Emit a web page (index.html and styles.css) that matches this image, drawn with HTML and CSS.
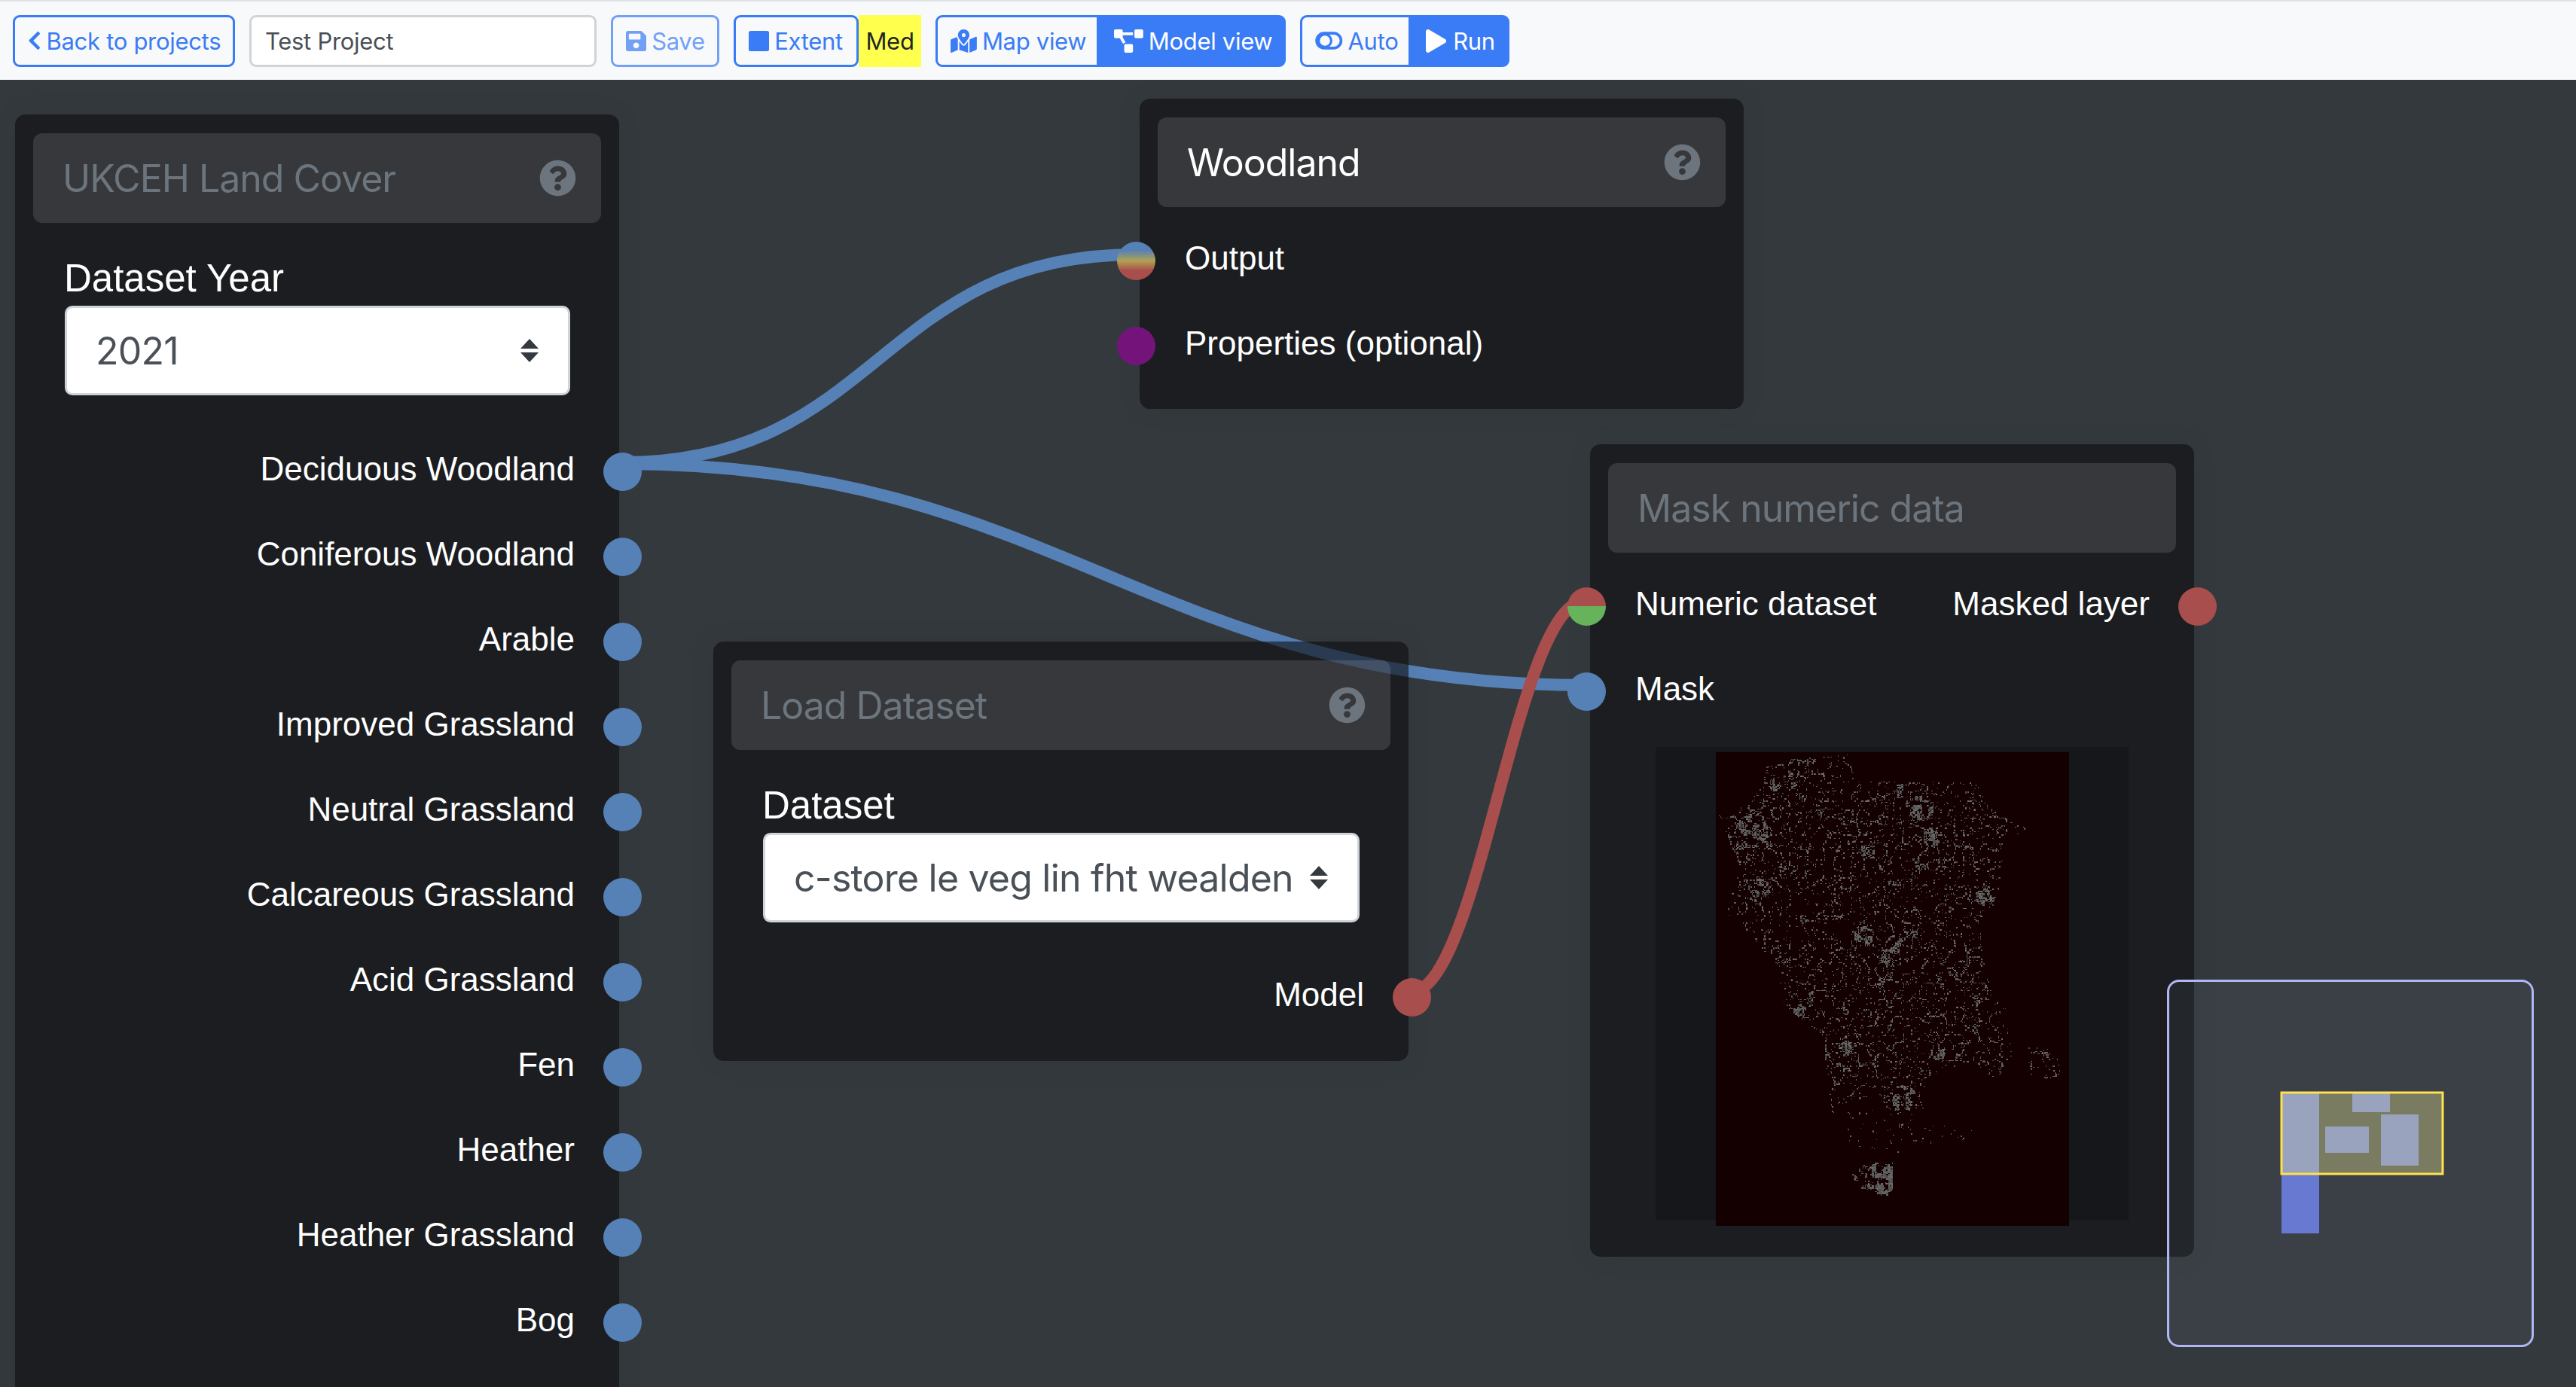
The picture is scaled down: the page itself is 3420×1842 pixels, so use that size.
FILE: index.html
```html
<!DOCTYPE html>
<html lang="en">
<head>
    <meta charset="UTF-8">
    <title>Test Project</title>
    <link rel="stylesheet" href="styles.css">
</head>
<body>
    <nav class="toolbar">
        <button class="btn back-btn">
            <svg class="icon" viewBox="0 0 320 512"><path d="M34.52 239.03L228.87 44.69c9.37-9.37 24.57-9.37 33.94 0l22.67 22.67c9.36 9.36 9.37 24.52.04 33.9L131.49 256l154.02 154.75c9.34 9.38 9.32 24.54-.04 33.9l-22.67 22.67c-9.37 9.37-24.57 9.37-33.94 0L34.52 272.97c-9.37-9.37-9.37-24.57 0-33.94z"/></svg>
            Back to projects
        </button>
        <input class="project-name" type="text" value="Test Project">
        <button class="btn save-btn">
            <svg class="icon" viewBox="0 0 448 512"><path d="M433.941 129.941l-83.882-83.882A48 48 0 0 0 316.118 32H48C21.49 32 0 53.49 0 80v352c0 26.51 21.49 48 48 48h352c26.51 0 48-21.49 48-48V163.882a48 48 0 0 0-14.059-33.941zM224 416c-35.346 0-64-28.654-64-64 0-35.346 28.654-64 64-64s64 28.654 64 64c0 35.346-28.654 64-64 64zm96-304.52V212c0 6.627-5.373 12-12 12H76c-6.627 0-12-5.373-12-12V108c0-6.627 5.373-12 12-12h228.52c3.183 0 6.235 1.264 8.485 3.515l3.48 3.48A11.996 11.996 0 0 1 320 111.48z"/></svg>
            Save
        </button>
        <div class="group">
            <button class="btn extent-btn">
                <svg class="icon" viewBox="0 0 448 512"><rect x="0" y="32" width="448" height="448" rx="48"/></svg>
                Extent
            </button>
            <span class="res-badge">Med</span>
        </div>
        <div class="group">
            <button class="btn joined-left map-btn">
                <svg class="icon" viewBox="0 0 576 512"><path d="M288 0c-69.59 0-126 56.41-126 126 0 56.26 82.35 158.8 113.9 196.02 6.39 7.54 17.82 7.54 24.2 0C331.65 284.8 414 182.26 414 126 414 56.41 357.59 0 288 0zm0 168c-23.2 0-42-18.8-42-42s18.8-42 42-42 42 18.8 42 42-18.8 42-42 42zM20.12 215.95A32.006 32.006 0 0 0 0 245.66v250.32c0 11.32 11.43 19.06 21.94 14.86L160 448V214.92c-8.84-15.98-16.07-31.54-21.25-46.42L20.12 215.95zM288 359.67c-14.07 0-27.38-6.18-36.51-16.96-19.66-23.2-40.57-49.62-59.49-76.72V448l192 64V266c-18.92 27.09-39.82 53.52-59.49 76.72-9.13 10.77-22.44 16.95-36.51 16.95zm266.06-198.51L416 224v288l139.88-55.95A31.996 31.996 0 0 0 576 426.34V176.02c0-11.32-11.43-19.06-21.94-14.86z"/></svg>
                Map view
            </button>
            <button class="btn joined-right active model-btn">
                <svg class="icon" viewBox="0 0 640 512"><path d="M384 320H256c-17.67 0-32 14.33-32 32v128c0 17.67 14.33 32 32 32h128c17.67 0 32-14.33 32-32V352c0-17.67-14.33-32-32-32zM192 32c0-17.67-14.33-32-32-32H32C14.33 0 0 14.33 0 32v128c0 17.67 14.33 32 32 32h95.72l73.16 128.04C211.98 300.98 232.4 288 256 288h.28L192 175.51V128h224V64H192V32zM608 0H480c-17.67 0-32 14.33-32 32v128c0 17.67 14.33 32 32 32h128c17.67 0 32-14.33 32-32V32c0-17.67-14.33-32-32-32z"/></svg>
                Model view
            </button>
        </div>
        <div class="group">
            <button class="btn joined-left auto-btn">
                <svg class="icon" viewBox="0 0 35 23"><rect x="2" y="2" width="31" height="19" rx="9.5" fill="none" stroke="currentColor" stroke-width="3.5"/><circle cx="12.5" cy="11.5" r="8" fill="none" stroke="currentColor" stroke-width="3"/></svg>
                Auto
            </button>
            <button class="btn joined-right active run-btn">
                <svg class="icon" viewBox="0 0 448 512"><path d="M424.4 214.7L72.4 6.6C43.8-10.3 0 6.1 0 47.9V464c0 37.5 40.7 60.1 72.4 41.3l352-208c31.4-18.5 31.5-64.1 0-82.6z"/></svg>
                Run
            </button>
        </div>
    </nav>

    <main class="editor">
        <!-- wires sit under the nodes, the node backgrounds are see-through -->
        <svg class="wires" viewBox="0 0 3420 1736">
            <g transform="translate(0,-106)" fill="none" stroke-width="16">
                <path d="M827 614 C1167 614 1168 338 1508 338" stroke="#5681b6"/>
                <path d="M827 616 C1403 616 1531 910 2107 910" stroke="#5681b6"/>
                <path d="M1872 1318 C1965 1318 2012 798 2105 798" stroke="#a84e4c"/>
            </g>
        </svg>

        <section class="node node-landcover">
            <header class="node-title muted">
                <span>UKCEH Land Cover</span>
                <svg class="help" viewBox="0 0 512 512"><path d="M504 256c0 136.997-111.043 248-248 248S8 392.997 8 256C8 119.083 119.043 8 256 8s248 111.083 248 248zM262.655 90c-54.497 0-89.255 22.957-116.549 63.758-3.536 5.286-2.353 12.415 2.715 16.258l34.699 26.31c5.205 3.947 12.621 3.008 16.665-2.122 17.864-22.658 30.113-35.797 57.303-35.797 20.429 0 45.698 13.148 45.698 32.958 0 14.976-12.363 22.667-32.534 33.976C247.128 238.528 216 254.941 216 296v4c0 6.627 5.373 12 12 12h56c6.627 0 12-5.373 12-12v-1.333c0-28.462 83.186-29.647 83.186-106.667 0-58.002-60.165-102-116.531-102zM256 338c-25.365 0-46 20.635-46 46 0 25.364 20.635 46 46 46s46-20.636 46-46c0-25.365-20.635-46-46-46z"/></svg>
            </header>
            <div class="field">
                <label class="field-label">Dataset Year</label>
                <div class="select">
                    <span>2021</span>
                    <svg class="select-arrows" viewBox="0 0 24 31"><path d="M12 0L24 13H0zM12 31L0 18h24z"/></svg>
                </div>
            </div>
            <div class="rows">
                <div class="row out">Deciduous Woodland<i class="socket blue"></i></div>
                <div class="row out">Coniferous Woodland<i class="socket blue"></i></div>
                <div class="row out">Arable<i class="socket blue"></i></div>
                <div class="row out">Improved Grassland<i class="socket blue"></i></div>
                <div class="row out">Neutral Grassland<i class="socket blue"></i></div>
                <div class="row out">Calcareous Grassland<i class="socket blue"></i></div>
                <div class="row out">Acid Grassland<i class="socket blue"></i></div>
                <div class="row out">Fen<i class="socket blue"></i></div>
                <div class="row out">Heather<i class="socket blue"></i></div>
                <div class="row out">Heather Grassland<i class="socket blue"></i></div>
                <div class="row out">Bog<i class="socket blue"></i></div>
            </div>
        </section>

        <section class="node node-woodland">
            <header class="node-title">
                <span>Woodland</span>
                <svg class="help" viewBox="0 0 512 512"><path d="M504 256c0 136.997-111.043 248-248 248S8 392.997 8 256C8 119.083 119.043 8 256 8s248 111.083 248 248zM262.655 90c-54.497 0-89.255 22.957-116.549 63.758-3.536 5.286-2.353 12.415 2.715 16.258l34.699 26.31c5.205 3.947 12.621 3.008 16.665-2.122 17.864-22.658 30.113-35.797 57.303-35.797 20.429 0 45.698 13.148 45.698 32.958 0 14.976-12.363 22.667-32.534 33.976C247.128 238.528 216 254.941 216 296v4c0 6.627 5.373 12 12 12h56c6.627 0 12-5.373 12-12v-1.333c0-28.462 83.186-29.647 83.186-106.667 0-58.002-60.165-102-116.531-102zM256 338c-25.365 0-46 20.635-46 46 0 25.364 20.635 46 46 46s46-20.636 46-46c0-25.365-20.635-46-46-46z"/></svg>
            </header>
            <div class="rows rows-tight">
                <div class="row in"><i class="socket mixed"></i>Output</div>
                <div class="row in"><i class="socket purple"></i>Properties (optional)</div>
            </div>
        </section>

        <section class="node node-load">
            <header class="node-title muted">
                <span>Load Dataset</span>
                <svg class="help" viewBox="0 0 512 512"><path d="M504 256c0 136.997-111.043 248-248 248S8 392.997 8 256C8 119.083 119.043 8 256 8s248 111.083 248 248zM262.655 90c-54.497 0-89.255 22.957-116.549 63.758-3.536 5.286-2.353 12.415 2.715 16.258l34.699 26.31c5.205 3.947 12.621 3.008 16.665-2.122 17.864-22.658 30.113-35.797 57.303-35.797 20.429 0 45.698 13.148 45.698 32.958 0 14.976-12.363 22.667-32.534 33.976C247.128 238.528 216 254.941 216 296v4c0 6.627 5.373 12 12 12h56c6.627 0 12-5.373 12-12v-1.333c0-28.462 83.186-29.647 83.186-106.667 0-58.002-60.165-102-116.531-102zM256 338c-25.365 0-46 20.635-46 46 0 25.364 20.635 46 46 46s46-20.636 46-46c0-25.365-20.635-46-46-46z"/></svg>
            </header>
            <div class="field">
                <label class="field-label">Dataset</label>
                <div class="select">
                    <span>c-store le veg lin fht wealden</span>
                    <svg class="select-arrows" viewBox="0 0 24 31"><path d="M12 0L24 13H0zM12 31L0 18h24z"/></svg>
                </div>
            </div>
            <div class="rows rows-load">
                <div class="row out">Model<i class="socket red"></i></div>
            </div>
        </section>

        <section class="node node-mask">
            <header class="node-title muted">
                <span>Mask numeric data</span>
            </header>
            <div class="rows rows-tight">
                <div class="row both">
                    <i class="socket red-green"></i>
                    <span>Numeric dataset</span>
                    <span>Masked layer</span>
                    <i class="socket red"></i>
                </div>
                <div class="row in"><i class="socket blue"></i>Mask</div>
            </div>
            <div class="preview">
                <canvas id="raster" width="313" height="420"></canvas>
            </div>
        </section>

        <svg class="minimap" viewBox="0 0 481 482">
            <rect x="149" y="147" width="214" height="108" fill="#797c60"/>
            <rect x="149" y="255" width="50" height="79" fill="#6879d2"/>
            <rect x="149" y="147" width="50" height="108" fill="#99a3bd"/>
            <rect x="243" y="147" width="50" height="26" fill="#99a3bd"/>
            <rect x="207" y="192" width="58" height="35" fill="#99a3bd"/>
            <rect x="281" y="176" width="50" height="68" fill="#99a3bd"/>
            <rect x="149" y="147" width="214" height="108" fill="none" stroke="#ffe14d" stroke-width="3"/>
        </svg>
    </main>

    <script src="raster.js"></script>
</body>
</html>
```

FILE: styles.css
```css
body {
    margin: 0;
    height: 100vh;
    display: flex;
    flex-direction: column;
    overflow: hidden;
    background-color: #34393d;
    font-family: "Liberation Sans", Arial, sans-serif;
}

/* toolbar */

.toolbar {
    flex: none;
    box-sizing: border-box;
    height: 106px;
    display: flex;
    align-items: center;
    gap: 19px;
    padding: 0 17px;
    background-color: #f8f9fa;
    border-top: 2px solid #dee2e6;
}

.group {
    display: flex;
}

.btn {
    box-sizing: border-box;
    height: 69px;
    display: flex;
    align-items: center;
    gap: 7px;
    padding: 0 17px;
    background-color: transparent;
    border: 3px solid #3a7bf6;
    border-radius: 9px;
    color: #3a7bf6;
    font-family: Inter, sans-serif;
    font-size: 31px;
    letter-spacing: -0.3px;
    white-space: nowrap;
}

.btn.active {
    background-color: #3a7bf6;
    color: white;
}

.joined-left {
    border-top-right-radius: 0;
    border-bottom-right-radius: 0;
}

.joined-right {
    border-top-left-radius: 0;
    border-bottom-left-radius: 0;
}

.icon {
    height: 31px;
    width: auto;
    flex: none;
    fill: currentColor;
}

.back-btn {
    width: 295px;
}

.back-btn .icon {
    height: 28px;
}

.save-btn {
    width: 144px;
    opacity: 0.7;
}

.extent-btn {
    width: 166px;
}

.map-btn {
    width: 217px;
}

.model-btn {
    width: 248px;
}

.auto-btn {
    width: 147px;
}

.auto-btn .icon {
    height: 24px;
}

.run-btn {
    width: 131px;
    gap: 9px;
}

.project-name {
    box-sizing: border-box;
    width: 461px;
    height: 69px;
    padding: 0 18px;
    background-color: white;
    border: 3px solid #ced4da;
    border-radius: 9px;
    color: #495057;
    font-family: Inter, sans-serif;
    font-size: 31px;
    letter-spacing: -0.3px;
}

.res-badge {
    box-sizing: border-box;
    width: 83px;
    height: 69px;
    display: flex;
    align-items: center;
    justify-content: center;
    background-color: #ffff4d;
    color: #212529;
    font-family: Inter, sans-serif;
    font-size: 31px;
    letter-spacing: -0.3px;
}

/* node editor */

.editor {
    position: relative;
    flex: 1;
    overflow: hidden;
}

.wires {
    position: absolute;
    left: 0;
    top: 0;
    width: 3420px;
    height: 1736px;
}

.node {
    position: absolute;
    box-sizing: border-box;
    background-color: rgba(12, 12, 14, 0.6);
    border-radius: 14px;
    box-shadow: 0 0 40px rgba(0, 0, 0, 0.05);
    color: white;
    font-size: 44px;
}

.node-landcover {
    left: 20px;
    top: 46px;
    width: 802px;
    height: 1800px;
}

.node-woodland {
    left: 1513px;
    top: 25px;
    width: 802px;
    height: 412px;
}

.node-load {
    left: 947px;
    top: 746px;
    width: 923px;
    height: 557px;
}

.node-mask {
    left: 2111px;
    top: 484px;
    width: 802px;
    height: 1079px;
}

.node-title {
    box-sizing: border-box;
    height: 119px;
    margin: 25px 24px 0;
    padding: 0 33px 0 39px;
    display: flex;
    align-items: center;
    justify-content: space-between;
    background-color: rgba(255, 255, 255, 0.12);
    border-radius: 12px;
    font-family: Inter, sans-serif;
    font-size: 50px;
    letter-spacing: -1px;
}

.node-title.muted {
    color: #6c757d;
}

.help {
    width: 49px;
    height: 49px;
    fill: #6c757d;
}

.field {
    margin: 42px 65px 0 66px;
}

.field-label {
    display: block;
    height: 68px;
    margin-left: -1px;
    line-height: 64px;
    font-size: 51px;
}

.select {
    box-sizing: border-box;
    height: 119px;
    display: flex;
    align-items: center;
    justify-content: space-between;
    padding: 0 39px 0 38px;
    background-color: white;
    border: 3px solid #ced4da;
    border-radius: 10px;
    color: #495057;
    font-family: Inter, sans-serif;
    font-size: 50px;
    letter-spacing: -0.8px;
    white-space: nowrap;
}

.select-arrows {
    width: 24px;
    height: 31px;
    fill: #343a40;
}

.rows {
    margin-top: 45px;
}

.rows-tight {
    margin-top: 15px;
}

.rows-load {
    margin-top: 43px;
}

.row {
    position: relative;
    box-sizing: border-box;
    height: 113px;
    display: flex;
    align-items: center;
    padding: 0 59px 8px 60px;
}

.row.out {
    justify-content: flex-end;
}

.row.both {
    justify-content: space-between;
}

.socket {
    position: absolute;
    top: 31px;
    width: 51px;
    height: 51px;
    border-radius: 50%;
}

.row.in .socket,
.row.both .socket:first-child {
    left: -30px;
}

.row.out .socket,
.row.both .socket:last-child {
    right: -30px;
}

.blue {
    background-color: #5681b6;
}

.red {
    background-color: #a84e4c;
}

.purple {
    background-color: #74147a;
}

.mixed {
    background: linear-gradient(#5681b6 22%, #b3a153 50%, #a84e4c 75%);
}

.red-green {
    background: linear-gradient(#a84e4c 50%, #66b35c 50%);
}

.preview {
    height: 628px;
    margin: 17px 87px 0;
    display: flex;
    justify-content: center;
    align-items: flex-start;
    background-color: #15171a;
}

#raster {
    width: 469px;
    height: 629px;
    margin-top: 7px;
    image-rendering: pixelated;
}

.minimap {
    position: absolute;
    left: 2877px;
    top: 1195px;
    box-sizing: border-box;
    width: 487px;
    height: 488px;
    background-color: rgba(120, 140, 170, 0.09);
    border: 3px solid #b0b6f2;
    border-radius: 16px;
}
```

FILE: raster.js
```js
// draws the speckled raster preview of the mask node
const canvas = document.getElementById("raster");
const ctx = canvas.getContext("2d");
const W = canvas.width;
const H = canvas.height;

let seed = 12345;
function rand() {
    seed = (seed * 1664525 + 1013904223) % 4294967296;
    return seed / 4294967296;
}

// lattice of random values for a simple value noise
const LATTICE = 128;
const grid = [];
for (let i = 0; i < LATTICE * LATTICE; i++) {
    grid.push(rand());
}

function noise(x, y) {
    const xi = Math.floor(x);
    const yi = Math.floor(y);
    const fx = x - xi;
    const fy = y - yi;
    const sx = fx * fx * (3 - 2 * fx);
    const sy = fy * fy * (3 - 2 * fy);
    const at = (a, b) => grid[((b & 127) * LATTICE) + (a & 127)];
    const top = at(xi, yi) * (1 - sx) + at(xi + 1, yi) * sx;
    const bottom = at(xi, yi + 1) * (1 - sx) + at(xi + 1, yi + 1) * sx;
    return top * (1 - sy) + bottom * sy;
}

// outlines are in a 1051x1408 space, density says how much of it is filled
const regions = [
    { density: 1, points: [[143, 25], [300, 15], [403, 5], [413, 85], [563, 85], [773, 90], [843, 185], [933, 225], [853, 275], [853, 355], [833, 445], [783, 495], [793, 615], [813, 695], [858, 735], [873, 855], [883, 925], [823, 975], [763, 915], [643, 955], [613, 1075], [523, 1085], [473, 1015], [343, 1055], [323, 905], [313, 835], [203, 755], [183, 635], [113, 555], [33, 485], [43, 405], [73, 345], [23, 225], [8, 185], [103, 145], [143, 85]] },
    { density: 0.7, points: [[925, 875], [965, 870], [1040, 915], [1040, 960], [960, 975], [930, 950]] },
    { density: 0.2, points: [[330, 1060], [760, 1060], [760, 1150], [560, 1190], [390, 1190]] },
    { density: 1.3, points: [[400, 1250], [460, 1215], [525, 1220], [525, 1310], [495, 1320], [420, 1290]] }
];

// solid grey patches
const blobs = [
    [105, 235, 50], [610, 165, 38], [800, 425, 30], [555, 1030, 42], [440, 545, 30],
    [640, 250, 30], [175, 95, 20], [130, 405, 30], [490, 1265, 48], [660, 890, 24],
    [960, 880, 18], [230, 60, 18], [385, 880, 22], [530, 570, 28], [250, 770, 20],
    [735, 445, 20]
];

function inside(points, x, y) {
    let hit = false;
    for (let i = 0, j = points.length - 1; i < points.length; j = i++) {
        const [xa, ya] = points[i];
        const [xb, yb] = points[j];
        if ((ya > y) !== (yb > y) && x < (xb - xa) * (y - ya) / (yb - ya) + xa) {
            hit = !hit;
        }
    }
    return hit;
}

ctx.fillStyle = "#140000";
ctx.fillRect(0, 0, W, H);

for (let py = 0; py < H; py++) {
    for (let px = 0; px < W; px++) {
        const x = px / W * 1051;
        const y = py / H * 1408;
        let density = 0;
        for (const region of regions) {
            if (inside(region.points, x, y)) {
                density = region.density;
            }
        }
        if (density === 0) {
            continue;
        }
        // thin web of lines from the ridges of the noise
        const ridge = 1 - Math.abs(2 * noise(px * 0.13, py * 0.13) - 1);
        const ridge2 = 1 - Math.abs(2 * noise(px * 0.31 + 50, py * 0.31 + 50) - 1);
        const patch = noise(px * 0.2 + 90, py * 0.2 + 90);
        let chance = 0.015;
        if (ridge > 0.92) {
            chance = 0.5;
        }
        if (ridge2 > 0.92) {
            chance = Math.max(chance, 0.22);
        }
        for (const [bx, by, br] of blobs) {
            const d = Math.hypot(x - bx, y - by) / br;
            if (d < 1 && patch > 0.45) {
                chance = Math.max(chance, 0.7);
            }
        }
        if (rand() < chance * density) {
            const grey = 72 + Math.floor(rand() * 40);
            ctx.fillStyle = `rgb(${grey},${grey},${grey})`;
            ctx.fillRect(px, py, 1, 1);
        }
    }
}
```
